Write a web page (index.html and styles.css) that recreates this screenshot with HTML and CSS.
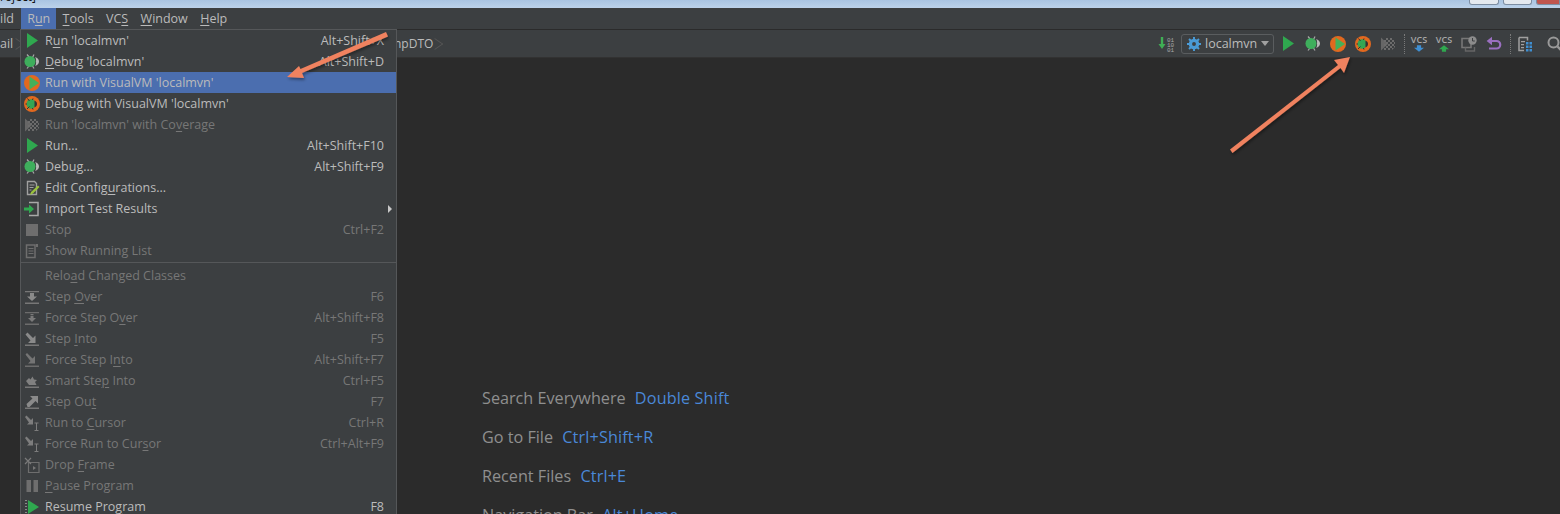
FILE: index.html
```html
<!DOCTYPE html>
<html lang="en">
<head>
<meta charset="utf-8">
<title>IDE Run menu</title>
<link rel="stylesheet" href="styles.css">
</head>
<body>
<svg class="defs" width="0" height="0" aria-hidden="true">
  <defs>
    <pattern id="dither" width="4" height="4" patternUnits="userSpaceOnUse"><path d="M0 0h2v2H0zM2 2h2v2H2z" fill="#6c6c6c"/></pattern>
    <symbol id="i-play" viewBox="0 0 16 16"><path d="M3 0 14 7.500 3 15z" fill="#2fa84f"/></symbol>
    <symbol id="i-bug" viewBox="0 0 16 16">
      <g fill="none" stroke="#a8a8a8" stroke-width="1.200"><path d="M3 .5 5.500 3.500M10 .5 8.500 3.500M3 14.500 5 12M10 14.500 8.500 12"/></g>
      <ellipse cx="6" cy="7.500" rx="5.500" ry="5.500" fill="#3eae5c"/>
      <path d="M11 3c2.500.5 4 2.500 4 4.500s-1.500 4-4 4.500c1-1.200 1.300-2.800 1-4.500.3-1.700 0-3.300-1-4.500z" fill="#b8b8b8"/>
    </symbol>
    <symbol id="i-runvm" viewBox="0 0 16 16">
      <circle cx="8" cy="8" r="8" fill="#e2691f"/>
      <path d="M5.500 1.500 15 8 5.500 14.500z" fill="#45b05a"/>
    </symbol>
    <symbol id="i-debugvm" viewBox="0 0 16 16">
      <circle cx="8" cy="8" r="8" fill="#e2691f"/>
      <ellipse cx="7" cy="8" rx="4.500" ry="4.800" fill="#35a653"/>
      <path d="M10.500 4.500c1.800.7 2.500 2 2.500 3.500s-.7 2.800-2.500 3.500z" fill="#333"/>
      <path d="M3.500 2.500 5.500 5M3 13l2.500-2.500M1.500 8h1.500M9 2.500 8.500 4M9 13.500 8.500 12" stroke="#333" stroke-width="1"/>
    </symbol>
    <symbol id="i-cover" viewBox="0 0 16 16">
      <path d="M1 1.500 8 8 1 14.500z" fill="#666"/>
      <path d="M4 2h8l3 3v6l-3 3H4z" fill="url(#dither)"/>
    </symbol>
    <symbol id="i-edit" viewBox="0 0 16 16">
      <path d="M3.500 1.500h7l2 2v11h-9z" fill="none" stroke="#a0a0a0" stroke-width="1.400"/>
      <path d="M5.500 5h5M5.500 7.500h4M5.500 10h2" stroke="#a0a0a0"/>
      <path d="M6 15l1-3 7-6.500 1.500 1.500L9 13.500z" fill="#9ac23c"/>
    </symbol>
    <symbol id="i-import" viewBox="0 0 16 16">
      <path d="M5 1.500h9v13H5" fill="none" stroke="#a8a8a8" stroke-width="1.500"/>
      <path d="M0 6.500h5V3.500L10 8l-5 4.500v-3H0z" fill="#2fa84f"/>
    </symbol>
    <symbol id="i-stop" viewBox="0 0 16 16"><rect x="2" y="2" width="12" height="12" fill="#6e6e6e"/></symbol>
    <symbol id="i-list" viewBox="0 0 16 16">
      <path d="M2.500 2h8.500v12.500H2.500z" fill="none" stroke="#6e6e6e" stroke-width="1.500"/>
      <path d="M4.500 5.500h5M4.500 8h5M4.500 10.500h5" stroke="#6e6e6e" stroke-width="1.200"/>
      <path d="M12 1h2v3h-2z" fill="#6e6e6e"/>
    </symbol>
    <symbol id="i-over" viewBox="0 0 16 16">
      <path d="M1 2h14v1.200H1zM1 13.500h14V15H1z" fill="#777"/>
      <path d="M6 4h4v3.500h3L8 12 3 7.500h3z" fill="#8a8a8a"/>
    </symbol>
    <symbol id="i-fover" viewBox="0 0 16 16">
      <path d="M1 2h14v1.200H1zM1 13.500h14V15H1z" fill="#6c6c6c"/>
      <path d="M6.500 4h3v1.200h-3zM6.500 6h3v2h2.500L8 12 4 8h2.500z" fill="#7a7a7a"/>
    </symbol>
    <symbol id="i-into" viewBox="0 0 16 16">
      <path d="M1 13.500h14V15H1z" fill="#777"/>
      <path d="M1.500 3.500 3.500 1.500 9 7l2.500-2.500V12H4l2.500-2.500z" fill="#8a8a8a"/>
    </symbol>
    <symbol id="i-finto" viewBox="0 0 16 16">
      <path d="M1 13.500h14V15H1z" fill="#6c6c6c"/>
      <path d="M1.500 2.500 3 1l5.500 5.500L11 4v7.500H4l2.500-2.500z" fill="#747474"/>
    </symbol>
    <symbol id="i-smart" viewBox="0 0 16 16">
      <path d="M1 13.500h14V15H1z" fill="#777"/>
      <path d="M2 8l3-3 1.500 1.500 2-3 1.500 3 3 .5-2 2 1.500 3H5z" fill="#808080"/>
    </symbol>
    <symbol id="i-out" viewBox="0 0 16 16">
      <path d="M1 13.500h14V15H1z" fill="#777"/>
      <path d="M2.500 10 8.500 4.500 6 2h8v7.500l-2.500-2.500-6 6H3.500z" fill="#8a8a8a"/>
    </symbol>
    <symbol id="i-cursor" viewBox="0 0 16 16">
      <path d="M1 2 2.500.5 7 5l2-2v6.500H3L5 7.500z" fill="#7d7d7d"/>
      <path d="M10.500 8h4M10.500 15.500h4M12.500 8v7.500" stroke="#7d7d7d" fill="none"/>
    </symbol>
    <symbol id="i-drop" viewBox="0 0 16 16">
      <path d="M4.500 5.500h10.500v10H4.500z" fill="none" stroke="#6e6e6e" stroke-width="1.200"/>
      <path d="M1 1l6 6M7 1 1 7" stroke="#7a7a7a" stroke-width="1.200"/>
      <path d="M9 9l3 2-3 2z" fill="#777"/>
    </symbol>
    <symbol id="i-pause" viewBox="0 0 16 16"><path d="M2.500 2h4.500v12H2.500zM9.500 2H14v12H9.500z" fill="#6e6e6e"/></symbol>
    <symbol id="i-resume" viewBox="0 0 16 16">
      <path d="M1 1h2v1H1zM1 4h2v1H1zM1 7h2v1H1zM1 10h2v1H1zM1 13h2v1H1z" fill="#8a8a8a"/>
      <path d="M4 1 15 8 4 15z" fill="#2fa84f"/>
    </symbol>
  </defs>
</svg>

<div class="app">
  <header class="titlebar">
    <span class="title-text">roject]</span>
    <div class="win-btns">
      <span class="win-btn"></span>
      <span class="win-btn win-btn-wide"></span>
      <span class="win-btn win-btn-close"></span>
    </div>
  </header>

  <nav class="menubar">
    <span class="mb-item mb-clip">ild</span>
    <span class="mb-item mb-active">R<u>u</u>n</span>
    <span class="mb-item"><u>T</u>ools</span>
    <span class="mb-item">VC<u>S</u></span>
    <span class="mb-item"><u>W</u>indow</span>
    <span class="mb-item"><u>H</u>elp</span>
  </nav>

  <div class="toolbar">
    <div class="crumbs">
      <span class="crumb-left">ail</span>
      <span class="crumb-chev"></span>
      <span class="crumb-right">npDTO</span>
      <span class="crumb-chev"></span>
    </div>
    <div class="tools">
      <svg class="tb-binary" viewBox="0 0 17 16" width="17" height="16">
        <path d="M4 1v8" stroke="#3fae55" stroke-width="2.400"/>
        <path d="M0.500 8h7L4 13z" fill="#3fae55"/>
        <text x="9" y="5.500" class="bin-text">01</text>
        <text x="9" y="10.500" class="bin-text">10</text>
        <text x="9" y="15.500" class="bin-text">01</text>
      </svg>
      <div class="combo">
        <svg class="combo-gear" viewBox="0 0 16 16" width="14" height="14">
          <circle cx="8" cy="8" r="4.500" fill="none" stroke="#4a9bd6" stroke-width="3"/>
          <path d="M8 0v16M0 8h16M2.300 2.300l11.400 11.400M13.700 2.300 2.300 13.700" stroke="#4a9bd6" stroke-width="2.200"/>
          <circle cx="8" cy="8" r="2.200" fill="#3c3f41"/>
        </svg>
        <span class="combo-text">localmvn</span>
        <span class="combo-arrow"></span>
      </div>
      <svg class="tb-ic" width="16" height="16"><use href="#i-play"/></svg>
      <svg class="tb-ic" width="16" height="16"><use href="#i-bug"/></svg>
      <svg class="tb-ic" width="16" height="16"><use href="#i-runvm"/></svg>
      <svg class="tb-ic" width="16" height="16"><use href="#i-debugvm"/></svg>
      <svg class="tb-ic" width="16" height="16"><use href="#i-cover"/></svg>
      <span class="tb-sep tb-sep-first"></span>
      <span class="vcs"><span class="vcs-label">VCS</span><svg viewBox="0 0 12 8" width="10" height="7"><path d="M3.500 0h5v3H12L6 8 0 3h3.500z" fill="#3f8fd2"/></svg></span>
      <span class="vcs"><span class="vcs-label">VCS</span><svg viewBox="0 0 12 8" width="10" height="7"><path d="M6 0l6 5H8.500v3h-5V5H0z" fill="#2fa84f"/></svg></span>
      <svg class="tb-ic" viewBox="0 0 16 16" width="16" height="16">
        <path d="M1 2.500h9v9H1z" fill="none" stroke="#777" stroke-width="1.600"/>
        <path d="M4.500 11.500v3.500h9v-4" fill="none" stroke="#666" stroke-width="1.400"/>
        <circle cx="11.500" cy="4.500" r="4.200" fill="#8c8c8c"/>
        <path d="M11.500 2v3h2.300" fill="none" stroke="#3c3f41"/>
      </svg>
      <svg class="tb-ic" viewBox="0 0 16 16" width="16" height="16">
        <path d="M2 5h8.500a3.700 3.700 0 0 1 0 7.500H3" fill="none" stroke="#9a6fc0" stroke-width="2.200"/>
        <path d="M6 .8v8.400L.6 5z" fill="#9a6fc0"/>
      </svg>
      <span class="tb-sep"></span>
      <svg class="tb-ic" viewBox="0 0 16 16" width="16" height="16">
        <path d="M1 1.500h8.500v3M1 1.500v13h5" fill="none" stroke="#a0a0a0" stroke-width="1.500"/>
        <path d="M3 5h4v1.200H3zM3 8h3v1.200H3zM3 11h3v1.200H3z" fill="#a0a0a0"/>
        <path d="M8 6h2.500v2.500H8zM11.500 6H14v2.500h-2.500zM8 9.500h2.500V12H8zM11.500 9.500H14V12h-2.500zM8 13h2.500v2.500H8zM11.500 13H14v2.500h-2.500z" fill="#3f8fd2"/>
      </svg>
      <svg class="tb-search" viewBox="0 0 16 16" width="16" height="16">
        <circle cx="6.500" cy="6.500" r="5" fill="none" stroke="#9a9a9a" stroke-width="2"/>
        <path d="M10.500 10.500 15 15" stroke="#9a9a9a" stroke-width="2.400"/>
      </svg>
    </div>
  </div>

  <main class="editor">
    <p class="hint">Search Everywhere <span class="key">Double Shift</span></p>
    <p class="hint">Go to File <span class="key">Ctrl+Shift+R</span></p>
    <p class="hint">Recent Files <span class="key">Ctrl+E</span></p>
    <p class="hint">Navigation Bar <span class="key">Alt+Home</span></p>
  </main>

  <div class="menu">
    <div class="row"><svg class="ic"><use href="#i-play"/></svg><span class="lbl">R<u>u</u>n 'localmvn'</span><span class="sc">Alt+Shift+X</span></div>
    <div class="row"><svg class="ic"><use href="#i-bug"/></svg><span class="lbl"><u>D</u>ebug 'localmvn'</span><span class="sc">Alt+Shift+D</span></div>
    <div class="row row-sel"><svg class="ic"><use href="#i-runvm"/></svg><span class="lbl">Run with VisualVM 'localmvn'</span></div>
    <div class="row"><svg class="ic"><use href="#i-debugvm"/></svg><span class="lbl">Debug with VisualVM 'localmvn'</span></div>
    <div class="row off"><svg class="ic"><use href="#i-cover"/></svg><span class="lbl">Run 'localmvn' with Co<u>v</u>erage</span></div>
    <div class="row"><svg class="ic"><use href="#i-play"/></svg><span class="lbl">Run...</span><span class="sc">Alt+Shift+F10</span></div>
    <div class="row"><svg class="ic"><use href="#i-bug"/></svg><span class="lbl">Debug...</span><span class="sc">Alt+Shift+F9</span></div>
    <div class="row"><svg class="ic"><use href="#i-edit"/></svg><span class="lbl">Edit Config<u>u</u>rations...</span></div>
    <div class="row"><svg class="ic"><use href="#i-import"/></svg><span class="lbl">Import Test Results</span><span class="sub"></span></div>
    <div class="row off"><svg class="ic"><use href="#i-stop"/></svg><span class="lbl">Stop</span><span class="sc">Ctrl+F2</span></div>
    <div class="row off"><svg class="ic"><use href="#i-list"/></svg><span class="lbl">Show Running List</span></div>
    <div class="sep"></div>
    <div class="row off"><span class="ic"></span><span class="lbl">Relo<u>a</u>d Changed Classes</span></div>
    <div class="row off"><svg class="ic"><use href="#i-over"/></svg><span class="lbl">Step <u>O</u>ver</span><span class="sc">F6</span></div>
    <div class="row off"><svg class="ic"><use href="#i-fover"/></svg><span class="lbl">Force Step O<u>v</u>er</span><span class="sc">Alt+Shift+F8</span></div>
    <div class="row off"><svg class="ic"><use href="#i-into"/></svg><span class="lbl">Step <u>I</u>nto</span><span class="sc">F5</span></div>
    <div class="row off"><svg class="ic"><use href="#i-finto"/></svg><span class="lbl">Force Step I<u>n</u>to</span><span class="sc">Alt+Shift+F7</span></div>
    <div class="row off"><svg class="ic"><use href="#i-smart"/></svg><span class="lbl">Smart Ste<u>p</u> Into</span><span class="sc">Ctrl+F5</span></div>
    <div class="row off"><svg class="ic"><use href="#i-out"/></svg><span class="lbl">Step Ou<u>t</u></span><span class="sc">F7</span></div>
    <div class="row off"><svg class="ic"><use href="#i-cursor"/></svg><span class="lbl">Run to <u>C</u>ursor</span><span class="sc">Ctrl+R</span></div>
    <div class="row off"><svg class="ic"><use href="#i-cursor"/></svg><span class="lbl">Force Run to Cur<u>s</u>or</span><span class="sc">Ctrl+Alt+F9</span></div>
    <div class="row off"><svg class="ic"><use href="#i-drop"/></svg><span class="lbl">Drop <u>F</u>rame</span></div>
    <div class="row off"><svg class="ic"><use href="#i-pause"/></svg><span class="lbl"><u>P</u>ause Program</span></div>
    <div class="row"><svg class="ic"><use href="#i-resume"/></svg><span class="lbl">Resume Pro<u>g</u>ram</span><span class="sc">F8</span></div>
  </div>

  <svg class="arrows" width="1560" height="514" aria-hidden="true">
    <defs>
      <filter id="arrow-shadow" x="-20%" y="-20%" width="140%" height="140%">
        <feDropShadow dx="1" dy="2" stdDeviation="1.500" flood-color="#000" flood-opacity=".4"/>
      </filter>
    </defs>
    <g filter="url(#arrow-shadow)" fill="#f0825f">
      <path d="M386 32 388 36.500 302 73 304 78 287 77 299 66 300.500 69z"/>
      <path d="M1230 149.500 1338 65 1334 60 1350 57 1344 73 1340.500 68 1232.500 153z"/>
    </g>
  </svg>
</div>
</body>
</html>
```
FILE: styles.css
```css
* { box-sizing: border-box; }
html, body { margin: 0; height: 100%; background: #2b2b2b; }
.defs { position: absolute; }
.app {
  position: relative;
  display: flex;
  flex-direction: column;
  width: 1560px;
  height: 514px;
  overflow: hidden;
  font-family: "Open Sans", "Noto Sans", sans-serif;
  font-size: 12.500px;
  color: #bbbbbb;
}
u { text-underline-offset: 2px; text-decoration-thickness: 1px; }

.titlebar {
  display: flex;
  justify-content: space-between;
  height: 8px;
  flex: none;
  background: linear-gradient(#a9c4e2, #bcd2ea);
  overflow: hidden;
}
.title-text { color: #111; font-size: 12px; line-height: 8px; margin-top: -7px; }
.win-btns { display: flex; gap: 4px; height: 5px; }
.win-btn { width: 30px; background: #e4e9ef; border: 1px solid #7d8ea3; border-top: 0; border-radius: 0 0 3px 3px; }
.win-btn-wide { width: 29px; }
.win-btn-close { width: 24px; background: #c0564f; border-radius: 0 0 0 3px; }

.menubar {
  display: flex;
  height: 21px;
  flex: none;
  background: #3c3f41;
  line-height: 21px;
}
.mb-item { padding: 0 6.200px; }
.mb-clip { padding: 0 7px 0 0; }
.mb-active { background: #4b6eaf; }

.toolbar {
  display: flex;
  justify-content: space-between;
  align-items: center;
  height: 29px;
  flex: none;
  background: #3c3f41;
  border-top: 1px solid #2b2b2b;
  border-bottom: 1px solid #323232;
}
.crumbs { display: flex; align-items: center; color: #bbb; }
.crumb-left { width: 14px; overflow: hidden; }
.crumb-right { margin-left: 373px; font-size: 12px; }
.crumb-chev {
  width: 10px;
  height: 10px;
  margin-left: -3px;
  border-top: 1px solid #555;
  border-right: 1px solid #555;
  transform: rotate(45deg) skew(-10deg, -10deg);
}
.tools { display: flex; align-items: center; height: 100%; }
.tb-binary { flex: none; margin-right: 6px; }
.bin-text { fill: #a8a8a8; font: 6px "Liberation Mono", monospace; }
.combo {
  display: flex;
  align-items: center;
  flex: none;
  width: 93px;
  height: 20px;
  padding: 0 4px 0 5px;
  border: 1px solid #5a5d5f;
  border-radius: 3px;
  margin-right: 1.500px;
}
.combo-gear { flex: none; }
.combo-text { margin-left: 4px; flex: 1; }
.combo-arrow {
  width: 0;
  height: 0;
  border-left: 4.500px solid transparent;
  border-right: 4.500px solid transparent;
  border-top: 5px solid #a0a0a0;
}
.tb-ic { flex: none; margin: 0 4.500px; }
.tb-sep {
  flex: none;
  width: 0;
  height: 20px;
  margin: 0 2.500px 0 3.500px;
  border-left: 1px dotted #7a7a7a;
}
.tb-sep-first { margin-right: 1.500px; }
.vcs {
  display: flex;
  flex: none;
  flex-direction: column;
  align-items: center;
  width: 25px;
  line-height: 7px;
}
.vcs-label { font-size: 9px; line-height: 9px; font-weight: 600; color: #a8a8a8; margin-bottom: 1px; }
.tb-search { flex: none; margin-left: 8.500px; margin-right: -3px; }

.editor {
  flex: 1;
  min-height: 0;
  padding: 329px 0 0 482px;
  background: #2b2b2b;
  overflow: hidden;
}
.hint { margin: 0 0 15.600px; font-size: 16.200px; line-height: 23.400px; color: #8f8f8f; white-space: nowrap; }
.key { margin-left: 5px; color: #4a88d8; letter-spacing: .15px; }

.menu {
  position: absolute;
  left: 20px;
  top: 29px;
  width: 377px;
  height: 500px;
  background: #3c3f41;
  border: 1px solid #555759;
}
.row {
  display: flex;
  align-items: center;
  height: 21px;
  padding: 0 12px 0 3px;
  white-space: nowrap;
}
.row-sel { background: #4b6eaf; }
.off { color: #777777; }
.ic { flex: none; display: block; width: 16px; height: 16px; margin-right: 5px; }
.lbl { flex: 1; }
.sc { flex: none; }
.sub {
  flex: none;
  width: 0;
  height: 0;
  margin-right: -8px;
  border-left: 4px solid #c8c8c8;
  border-top: 4px solid transparent;
  border-bottom: 4px solid transparent;
}
.sep { height: 3px; border-top: 1px solid #555759; margin-top: 1px; }

.arrows { position: absolute; left: 0; top: 0; pointer-events: none; }
```
